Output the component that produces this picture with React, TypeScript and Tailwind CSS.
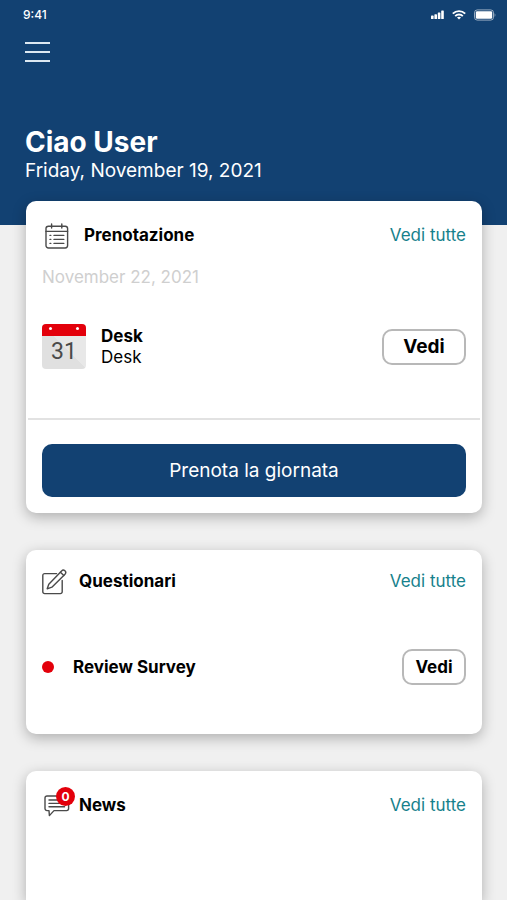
import type { ReactNode } from "react";

const ink = { fill: "none", stroke: "#4a4a4a", strokeLinecap: "round", strokeLinejoin: "round" } as const;

function StatusIcons() {
  return (
    <div className="flex items-center gap-2" aria-hidden="true">
      <svg width="13" height="10" viewBox="0 0 13 10" fill="#fff">
        <rect x="0" y="5.6" width="2.6" height="3.4" rx="0.6" />
        <rect x="3.4" y="4.2" width="2.6" height="4.8" rx="0.6" />
        <rect x="6.8" y="2.4" width="2.6" height="6.6" rx="0.6" />
        <rect x="10.2" y="0.4" width="2.6" height="8.6" rx="0.6" />
      </svg>
      <svg width="14" height="10" viewBox="0 0 14 10" fill="none" stroke="#fff" strokeWidth="1.9">
        <path d="M0.8 3.7C4.3 0.2 9.7 0.2 13.2 3.7" />
        <path d="M3.2 6.1C5.3 4 8.7 4 10.8 6.1" />
        <path d="M7 9.6 5 7.6C6.1 6.6 7.9 6.6 9 7.6Z" fill="#fff" stroke="none" />
      </svg>
      <svg width="22" height="12" viewBox="0 0 22 12">
        <rect x="0.5" y="0.9" width="19" height="10.2" rx="2.8" fill="none" stroke="#fff" strokeOpacity="0.55" />
        <rect x="1.8" y="2.2" width="16.4" height="7.6" rx="1.4" fill="#fff" />
        <path d="M20.6 4.2c1 .4 1 3.2 0 3.6Z" fill="#fff" fillOpacity="0.6" />
      </svg>
    </div>
  );
}

function ScheduleIcon() {
  return (
    <svg width="24" height="26" viewBox="0 0 24 26" strokeWidth="1.4" {...ink}>
      <rect x="1" y="3.2" width="21.6" height="21.8" rx="2.4" />
      <path d="M1 8.4H22.6M6.6 1V5M16.8 1V5" />
      <path d="M9 12.4H18.8M9 16.4H18.8M9 20.4H18.8" />
      <path d="M5 12.4H5.8M5 16.4H5.8M5 20.4H5.8" />
    </svg>
  );
}

function EditIcon() {
  return (
    <svg width="25" height="26" viewBox="0 0 25 26" strokeWidth="1.4" {...ink}>
      <path d="M14.6 4.6H2.6A1.8 1.8 0 0 0 .8 6.4V22.8A1.8 1.8 0 0 0 2.6 24.6H18.4A1.8 1.8 0 0 0 20.2 22.8V11.4" />
      <path d="M5.2 19.8 6.8 15.2 19.6 1.9C20.6 .9 21.9 .9 22.9 1.8 24 2.8 24 4.1 23 5.2L9.9 18.2Z" />
      <path d="M18.4 3.2 21.8 6.5" />
    </svg>
  );
}

function ChatIcon() {
  return (
    <svg width="26" height="22" viewBox="0 0 26 22" strokeWidth="1.4" {...ink}>
      <path d="M3 1H22.6A2 2 0 0 1 24.6 3V13.6A2 2 0 0 1 22.6 15.6H10L5.4 20.6 5 15.6H3A2 2 0 0 1 1 13.6V3A2 2 0 0 1 3 1Z" />
      <path d="M5 5H20.6M5 8.4H20.6M5 11.8H20.6" />
    </svg>
  );
}

function DayIcon() {
  return (
    <div className="h-[45px] w-11 overflow-hidden rounded bg-[linear-gradient(45deg,#e0e0e0_50%,#e8e8e8_50%)]">
      <div className="flex h-3 justify-between bg-[#e3000b] px-[7px] pt-[3px]">
        <span className="size-[3px] rounded-full bg-white" />
        <span className="size-[3px] rounded-full bg-white" />
      </div>
      <p className="text-center font-[Roboto,sans-serif] text-[23px] leading-[31px] text-[#4a4a4a]">31</p>
    </div>
  );
}

function Card({ className, children }: { className: string; children: ReactNode }) {
  return (
    <section className={`bg-white shadow-[0_4px_14px_rgba(0,0,0,0.28)] ${className}`}>{children}</section>
  );
}

function CardHeader({ icon, title }: { icon: ReactNode; title: string }) {
  return (
    <div className="flex h-[30px] items-center px-4">
      {icon}
      <h2 className="text-[17px] font-bold">{title}</h2>
      <a href="#" className="ml-auto text-[17px] text-[#16818c]">
        Vedi tutte
      </a>
    </div>
  );
}

export default function App() {
  return (
    <div className="flex min-h-screen flex-col bg-[#f0f0f0] font-[Inter,sans-serif] text-black">
      <header className="bg-[#124172] pb-[42px] text-white">
        <div className="flex h-[30px] items-center justify-between pr-[11px] pl-[23px]">
          <span className="text-xs font-medium">9:41</span>
          <StatusIcons />
        </div>
        <div className="px-[25px]">
          <button type="button" aria-label="Menu" className="mt-3 flex h-5 w-[25px] flex-col justify-between">
            <span className="h-[2px] w-full bg-[#dce8f2]" />
            <span className="h-[2px] w-full bg-[#dce8f2]" />
            <span className="h-[2px] w-full bg-[#dce8f2]" />
          </button>
          <h1 className="mt-16 text-[28px] leading-8 font-bold">Ciao User</h1>
          <p className="text-[19px] leading-[25px]">Friday, November 19, 2021</p>
        </div>
      </header>

      <main className="-mt-6 flex flex-1 flex-col gap-[37px] pr-[25px] pl-[26px]">
        <Card className="rounded-[10px] pt-5 pb-4">
          <CardHeader
            icon={
              <span className="w-[42px] pl-[3px]">
                <ScheduleIcon />
              </span>
            }
            title="Prenotazione"
          />
          <p className="mt-[15px] px-4 text-[17px] leading-[22px] text-[#cfcfcf]">November 22, 2021</p>
          <div className="mt-9 mb-[49px] flex items-center px-4">
            <DayIcon />
            <div className="ml-[15px] text-[17px] leading-[21px]">
              <h3 className="font-bold">Desk</h3>
              <p>Desk</p>
            </div>
            <button
              type="button"
              className="ml-auto h-9 w-[84px] rounded-[10px] border-2 border-[#b8b8b8] pt-[2px] text-[19px] font-bold"
            >
              Vedi
            </button>
          </div>
          <hr className="mx-[2px] border-t-2 border-[#e2e2e2]" />
          <div className="mt-6 px-4">
            <button type="button" className="h-[53px] w-full rounded-[10px] bg-[#124172] pt-[2px] text-[19px] text-white">
              Prenota la giornata
            </button>
          </div>
        </Card>

        <Card className="rounded-[10px] pt-[17px] pb-[49px]">
          <CardHeader
            icon={
              <span className="w-[37px]">
                <EditIcon />
              </span>
            }
            title="Questionari"
          />
          <div className="mt-[52px] flex items-center px-4">
            <span className="size-3 rounded-full bg-[#e3000b]" />
            <h3 className="ml-[19px] pt-[2px] text-[17px] font-bold">Review Survey</h3>
            <button
              type="button"
              className="ml-auto h-9 w-16 rounded-[10px] border-2 border-[#b8b8b8] pt-[2px] text-[17px] font-bold"
            >
              Vedi
            </button>
          </div>
        </Card>

        <Card className="flex-1 rounded-t-[10px] pt-5">
          <CardHeader
            icon={
              <span className="relative w-[37px] pl-[2px]">
                <ChatIcon />
                <span className="absolute -top-2 right-1 flex size-[19px] items-center justify-center rounded-full bg-[#e3000b] text-xs font-bold text-white">
                  0
                </span>
              </span>
            }
            title="News"
          />
        </Card>
      </main>
    </div>
  );
}
